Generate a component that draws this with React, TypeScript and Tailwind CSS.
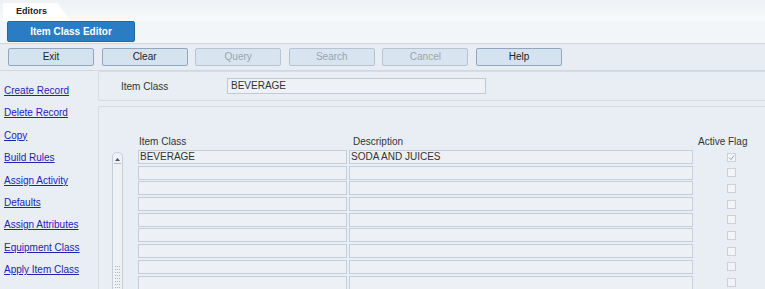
import { useState } from "react";

const links = [
  "Create Record",
  "Delete Record",
  "Copy",
  "Build Rules",
  "Assign Activity",
  "Defaults",
  "Assign Attributes",
  "Equipment Class",
  "Apply Item Class",
];

const buttons = [
  { label: "Exit", enabled: true },
  { label: "Clear", enabled: true },
  { label: "Query", enabled: false },
  { label: "Search", enabled: false },
  { label: "Cancel", enabled: false },
  { label: "Help", enabled: true },
];

const rows = [
  { itemClass: "BEVERAGE", description: "SODA AND JUICES", active: true },
  ...Array.from({ length: 8 }, () => ({ itemClass: "", description: "", active: false })),
];

const App = () => {
  const [itemClass] = useState("BEVERAGE");

  return (
    <div
      className="w-[765px] h-[289px] overflow-hidden bg-[#e9eef5] text-[#333] text-[10px]"
      style={{ fontFamily: '"Liberation Sans", Arial, sans-serif' }}
    >
      {/* Tab strip */}
      <div className="h-[21px] bg-gradient-to-b from-[#eef2f6] to-[#f7f9fb] relative">
        <div
          className="absolute left-[3px] top-[3px] h-[18px] w-[68px] bg-white pl-[13px] pt-[2px] text-[9px] font-bold text-[#222]"
          style={{ clipPath: "polygon(0 0, 80% 0, 100% 100%, 0 100%)" }}
        >
          Editors
        </div>
      </div>

      {/* Editor title */}
      <div className="pl-[7px] pb-[1px] bg-[#f3f6f9]">
        <div className="w-[128px] h-[21px] bg-[#2a7dc2] rounded-[2px] border border-[#1f6aa8] text-white font-bold text-[10px] flex items-center justify-center">
          Item Class Editor
        </div>
      </div>

      {/* Toolbar */}
      <div className="h-[28px] border-t border-b border-[#cfd9e4] flex items-center pl-[8px] gap-[7.6px] bg-[#e8edf4]">
        {buttons.map((b) => (
          <button
            key={b.label}
            disabled={!b.enabled}
            className={
              b.enabled
                ? "w-[86px] h-[18px] bg-[#d5e3f1] border border-[#93a6ba] rounded-[2px] text-[10px] text-[#222] leading-none"
                : "w-[86px] h-[18px] bg-[#d8e4f0] border border-[#b6c4d2] rounded-[2px] text-[10px] text-[#9aa4ae] leading-none"
            }
          >
            {b.label}
          </button>
        ))}
      </div>

      <div className="flex">
        {/* Sidebar */}
        <div className="w-[98px] shrink-0 pl-[4px] pt-[13px] flex flex-col gap-[8.4px]">
          {links.map((l) => (
            <a
              key={l}
              href="#"
              className="text-[10px] leading-[14px] text-[#2222bb] underline whitespace-nowrap"
            >
              {l}
            </a>
          ))}
        </div>

        {/* Main */}
        <div className="flex-1 flex flex-col gap-[5px]">
          <div className="h-[30px] border border-[#d3dce7] rounded-[2px] flex items-center">
            <span className="pl-[22px] w-[128px] text-[#333]">Item Class</span>
            <div className="w-[259px] h-[16px] border border-[#bfcad7] bg-[#eef2f7] pl-[3px] leading-[14px] text-[#333]">
              {itemClass}
            </div>
          </div>

          <div className="h-[200px] border border-[#d3dce7] rounded-[2px] relative">
            {/* Headers */}
            <div className="flex mt-[27px] h-[14px] items-center">
              <span className="ml-[40px] w-[214px]">Item Class</span>
              <span className="w-[344px]">Description</span>
              <span className="ml-[1px]">Active Flag</span>
            </div>

            <div className="flex mt-[2px]">
              {/* Scrollbar */}
              <div className="ml-[13px] mt-[2px] w-[11px] h-[140px] border border-[#c3cfdc] rounded-t-[5px] bg-[#eef2f7] flex flex-col items-center">
                <svg width="9" height="9" viewBox="0 0 9 9" className="mt-[2px]">
                  <path d="M2 6 L4.5 3 L7 6 Z" fill="#555" />
                  <line x1="1" y1="8.5" x2="8" y2="8.5" stroke="#b0bccb" />
                </svg>
                <div className="mt-auto mb-[2px] flex flex-col gap-[1px]">
                  {Array.from({ length: 8 }).map((_, i) => (
                    <div key={i} className="w-[5px] h-[2px] border-t border-dotted border-[#a8b4c2]" />
                  ))}
                </div>
              </div>

              <div className="ml-[15px] flex flex-col gap-[1.7px]">
                {rows.map((r, i) => (
                  <div key={i} className="flex h-[14px] items-center">
                    <div className="w-[209px] h-[14px] border border-[#c3cfdc] bg-[#edf1f6] pl-[1px] leading-[12px] text-[#333]">
                      {r.itemClass}
                    </div>
                    <div className="ml-[2px] w-[344px] h-[14px] border border-[#c3cfdc] bg-[#edf1f6] pl-[1px] leading-[12px] text-[#333]">
                      {r.description}
                    </div>
                    <div className="w-[76px] flex justify-center pl-[1px]">
                      <div className="w-[9px] h-[9px] border border-[#c8d0da] bg-[#f2f4f7] flex items-center justify-center">
                        {r.active && (
                          <svg width="7" height="7" viewBox="0 0 7 7">
                            <path d="M1 3.5 L3 5.5 L6 1.5" stroke="#9aa3ad" strokeWidth="1" fill="none" />
                          </svg>
                        )}
                      </div>
                    </div>
                  </div>
                ))}
              </div>
            </div>
          </div>
        </div>
      </div>
    </div>
  );
};

export default App;
